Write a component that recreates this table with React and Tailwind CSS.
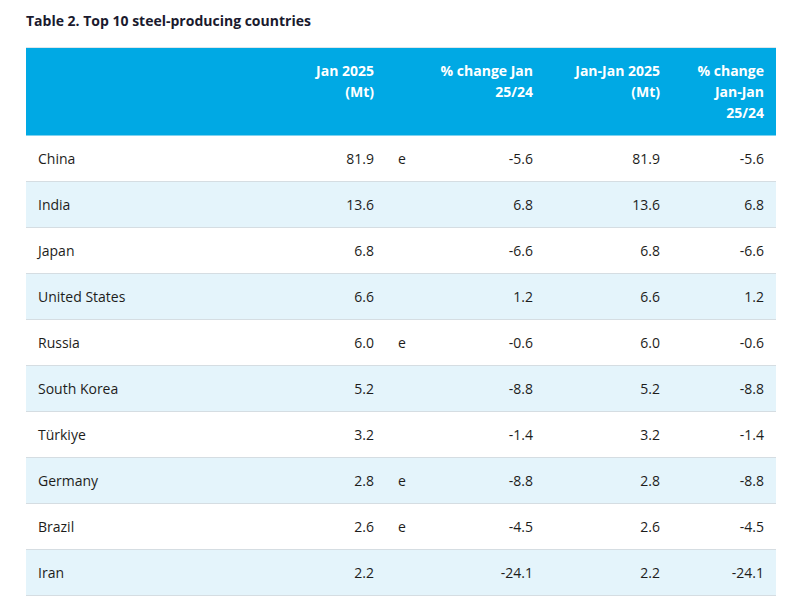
const rows = [
  ['China', '81.9', 'e', '-5.6', '81.9', '-5.6'],
  ['India', '13.6', '', '6.8', '13.6', '6.8'],
  ['Japan', '6.8', '', '-6.6', '6.8', '-6.6'],
  ['United States', '6.6', '', '1.2', '6.6', '1.2'],
  ['Russia', '6.0', 'e', '-0.6', '6.0', '-0.6'],
  ['South Korea', '5.2', '', '-8.8', '5.2', '-8.8'],
  ['Türkiye', '3.2', '', '-1.4', '3.2', '-1.4'],
  ['Germany', '2.8', 'e', '-8.8', '2.8', '-8.8'],
  ['Brazil', '2.6', 'e', '-4.5', '2.6', '-4.5'],
  ['Iran', '2.2', '', '-24.1', '2.2', '-24.1'],
]

export default function App() {
  return (
    <div className="bg-white min-h-screen px-[26px] pt-[10px] font-['Open_Sans',sans-serif] text-[14px] text-[#1d1d1b]">
      <h3 className="font-bold text-[14px] leading-[21px] text-[#1a1a2e] mb-[16px]">Table 2. Top 10 steel-producing countries</h3>
      <table className="w-[750px] table-fixed border-collapse leading-[21px]">
        <colgroup>
          <col className="w-[264px]" />
          <col className="w-[96px]" />
          <col className="w-[40px]" />
          <col className="w-[119px]" />
          <col className="w-[127px]" />
          <col className="w-[104px]" />
        </colgroup>
        <thead>
          <tr className="bg-[#00a9e4] text-white font-bold align-top border-t border-[#dfe6ea] border-b border-b-[#7fd2ef]">
            <th className="px-3 py-3"></th>
            <th className="px-3 py-3 text-right font-bold">Jan 2025 (Mt)</th>
            <th className="px-3 py-3"></th>
            <th className="px-3 py-3 text-right font-bold">% change Jan 25/24</th>
            <th className="px-3 py-3 text-right font-bold">Jan-Jan 2025 (Mt)</th>
            <th className="px-3 py-3 text-right font-bold">% change Jan-Jan 25/24</th>
          </tr>
        </thead>
        <tbody>
          {rows.map((r, i) => (
            <tr key={r[0]} className={`border-b border-[#d5dde2] ${i % 2 ? 'bg-[#e4f4fb]' : 'bg-white'}`}>
              <td className="px-3 py-3">{r[0]}</td>
              <td className="px-3 py-3 text-right">{r[1]}</td>
              <td className="px-3 py-3">{r[2]}</td>
              <td className="px-3 py-3 text-right">{r[3]}</td>
              <td className="px-3 py-3 text-right">{r[4]}</td>
              <td className="px-3 py-3 text-right">{r[5]}</td>
            </tr>
          ))}
        </tbody>
      </table>
    </div>
  )
}
